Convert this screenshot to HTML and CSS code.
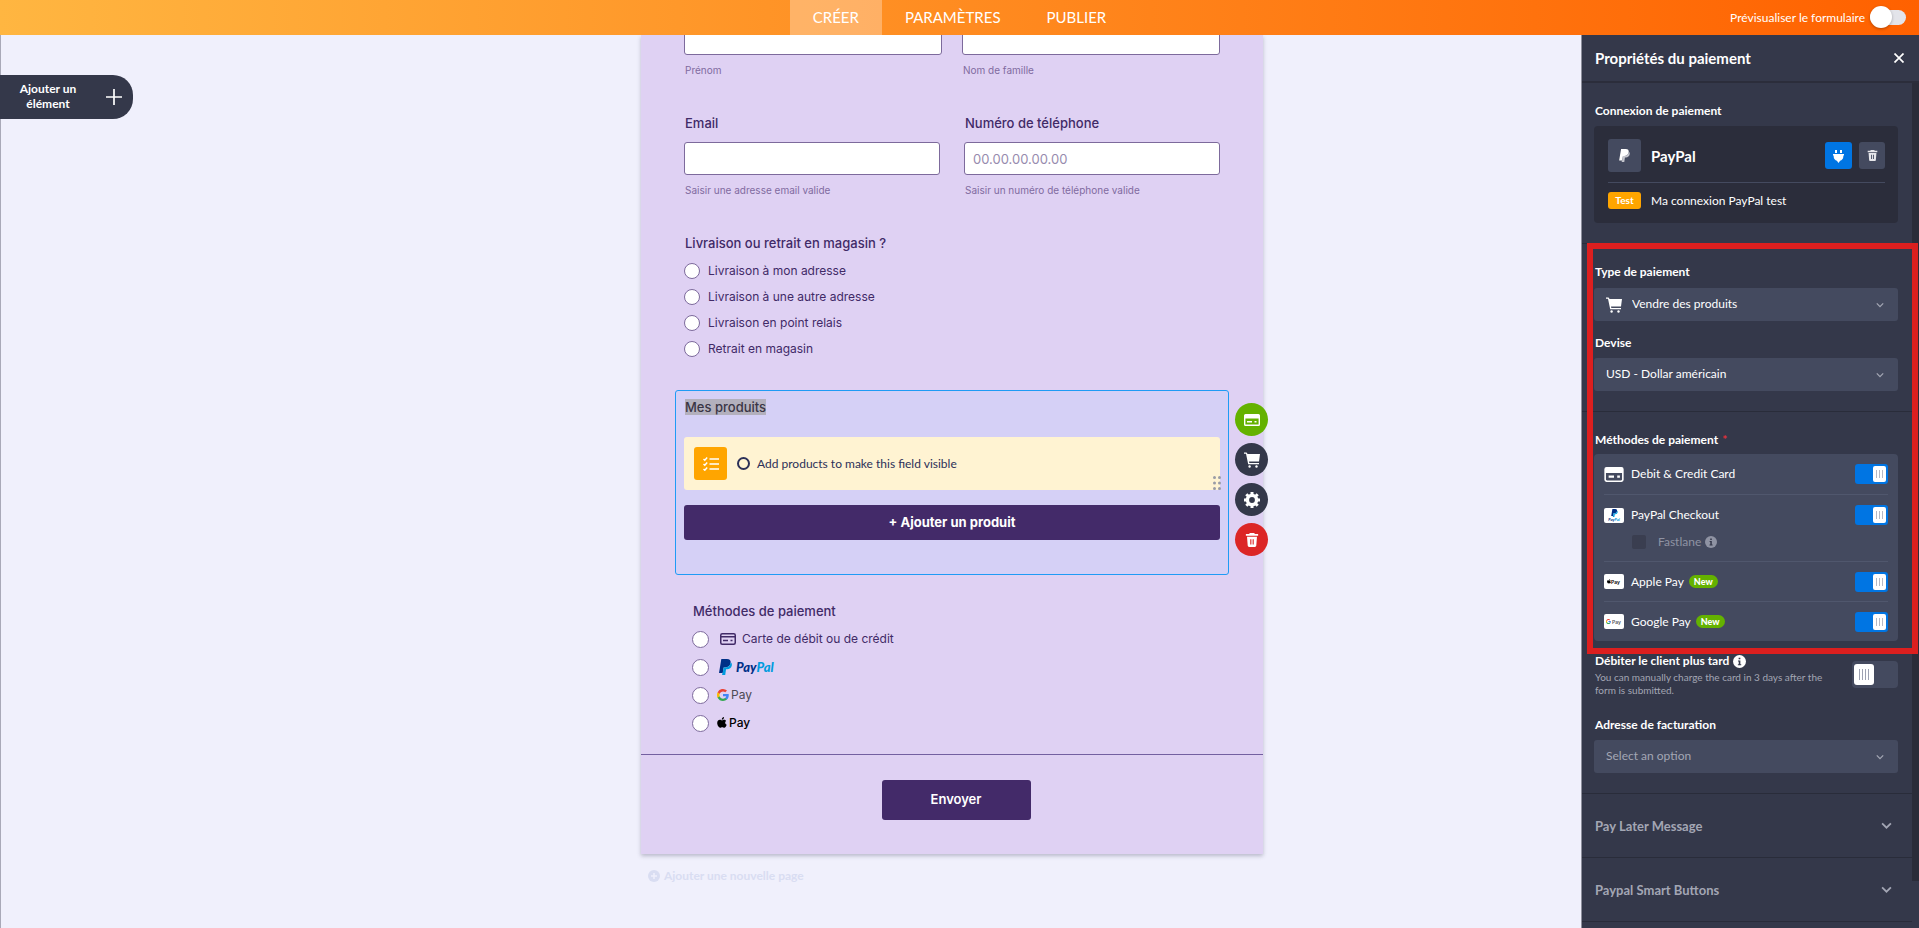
FILE: index.html
```html
<!DOCTYPE html>
<html lang="fr">
<head>
<meta charset="utf-8">
<title>Propriétés du paiement</title>
<link rel="stylesheet" href="styles.css">
</head>
<body>
<svg class="defs" aria-hidden="true">
  <symbol id="i-cart" viewBox="0 0 16 16"><path d="M0 .5h2.200c.5 0 .9.3 1 .8L3.400 2H16l-1 7.500H5l.3 1.500H15V12.300H4.200L2 1.800H0z" fill="currentColor"/><circle cx="5.600" cy="14.500" r="1.200" fill="currentColor"/><circle cx="12.500" cy="14.500" r="1.200" fill="currentColor"/></symbol>
  <symbol id="i-trash" viewBox="0 0 16 16"><path fill="currentColor" fill-rule="evenodd" d="M5.500 0h5l.8 1.200H15v2H1v-2h3.700zM2.300 4.200h11.400l-.8 10.200c-.1.900-.7 1.600-1.600 1.600H4.700c-.9 0-1.500-.7-1.600-1.600zM6 7v6h1.300V7zm2.700 0v6H10V7z"/></symbol>
  <symbol id="i-cardfill" viewBox="0 0 18 14"><path fill="currentColor" fill-rule="evenodd" d="M2 0h14a2 2 0 0 1 2 2v10a2 2 0 0 1-2 2H2a2 2 0 0 1-2-2V2a2 2 0 0 1 2-2zM1.500 5.500V11.500c0 .6.400 1 1 1h13c.6 0 1-.4 1-1V5.500zM4 8h5v2H4zm8 0h2.500v2H12z"/></symbol>
  <symbol id="i-down" viewBox="0 0 10 6"><path d="M1 1l4 4 4-4" fill="none" stroke="currentColor" stroke-width="1.600"/></symbol>
  <symbol id="i-info" viewBox="0 0 12 12"><circle cx="6" cy="6" r="6" fill="currentColor"/><path d="M5.200 2.500h1.600v1.500H5.200zM4.600 5h2.200v3.500h.8v1H4.500v-1h.8V6h-.7z" fill="#34384a"/></symbol>
  <symbol id="i-pp" viewBox="0 0 14 17"><path d="M2.500 0h6c3 0 4.500 1.600 4 4.300-.6 3.200-2.700 4.700-5.700 4.700H5l-1 6H0z" fill="#003087"/><path d="M12.700 3.500c1.100.8 1.400 2 1.100 3.500-.6 2.800-2.400 4-5 4H7.600L6.700 17H3.300l.4-2H4l1-6h1.800c3 0 5.100-1.500 5.900-5.500z" fill="#009cde"/></symbol>
  <symbol id="i-g" viewBox="0 0 24 24"><path fill="#4285f4" d="M23.500 12.300c0-.8-.1-1.600-.2-2.300H12v4.500h6.500c-.3 1.500-1.100 2.800-2.400 3.600v3h3.900c2.200-2.100 3.500-5.200 3.500-8.800z"/><path fill="#34a853" d="M12 24c3.200 0 6-1.100 7.900-2.900l-3.900-3c-1.100.7-2.400 1.200-4 1.200-3.100 0-5.800-2.100-6.700-5H1.300v3.100C3.300 21.300 7.300 24 12 24z"/><path fill="#fbbc04" d="M5.300 14.300a7.200 7.200 0 0 1 0-4.600V6.600h-4a12 12 0 0 0 0 10.800z"/><path fill="#ea4335" d="M12 4.800c1.800 0 3.300.6 4.600 1.800L20 3.100A12 12 0 0 0 1.300 6.600l4 3.100c.9-2.800 3.600-4.900 6.700-4.900z"/></symbol>
  <symbol id="i-apple" viewBox="0 0 14 17"><path fill="#000" d="M9.900 0c.1 1.100-.3 2-.9 2.700-.6.700-1.500 1.200-2.300 1.100-.1-1 .3-2 .9-2.600C8.200.500 9.200 0 9.900 0zM12.800 5.700c-1.900 1.200-1.800 4.100.8 5.200-.5 1.500-1.900 4.200-3.400 4.200-1.100 0-1.500-.7-2.800-.7s-1.800.7-2.800.7C2.500 15.200.200 11.500.200 8.500c0-2.900 1.900-4.500 3.800-4.500 1.200 0 2.300.9 3 .9s2-.9 3.400-.9c.8 0 1.800.5 2.400 1.700z"/></symbol>
</svg>

<header class="topbar">
  <nav class="tabs">
    <a class="tab tab-active" href="#creer">CRÉER</a>
    <a class="tab" href="#parametres">PARAMÈTRES</a>
    <a class="tab" href="#publier">PUBLIER</a>
  </nav>
  <label class="preview">Prévisualiser le formulaire <input class="preview-switch" type="checkbox"></label>
</header>

<div class="workspace">
  <div class="left">
    <button class="add-element" type="button"><span>Ajouter un élément</span>
      <svg width="16" height="16" viewBox="0 0 16 16"><path d="M8 0v16M0 8h16" stroke="#fff" stroke-width="1.700"/></svg>
    </button>
  </div>

  <main class="stage">
    <form class="form">
      <div class="row row-names">
        <div class="field"><input class="box" id="prenom" type="text"><label class="sub" for="prenom">Prénom</label></div>
        <div class="field"><input class="box" id="nom" type="text"><label class="sub" for="nom">Nom de famille</label></div>
      </div>
      <div class="row row-contact">
        <div class="field"><label class="title" for="email">Email</label><input class="box" id="email" type="email"><span class="sub">Saisir une adresse email valide</span></div>
        <div class="field"><label class="title" for="tel">Numéro de téléphone</label><input class="box" id="tel" type="tel" placeholder="00.00.00.00.00"><span class="sub">Saisir un numéro de téléphone valide</span></div>
      </div>
      <div class="group" role="radiogroup" aria-labelledby="liv">
        <div class="title" id="liv">Livraison ou retrait en magasin ?</div>
        <label class="option"><input class="radio" type="radio" name="liv">Livraison à mon adresse</label>
        <label class="option"><input class="radio" type="radio" name="liv">Livraison à une autre adresse</label>
        <label class="option"><input class="radio" type="radio" name="liv">Livraison en point relais</label>
        <label class="option"><input class="radio" type="radio" name="liv">Retrait en magasin</label>
      </div>

      <section class="products">
        <div class="products-title"><span class="selected-text">Mes produits</span></div>
        <div class="notice">
          <span class="notice-icon"><svg width="16" height="14" viewBox="0 0 16 14" fill="none" stroke="#fff" stroke-width="1.500"><path d="M6.500 2H16M6.500 7H16M6.500 12H16M.5 2l1.300 1.200L4.200.6M.5 7l1.300 1.200 2.400-2.600M.5 12l1.300 1.200 2.400-2.600"/></svg></span>
          <span class="ring"></span>
          <span>Add products to make this field visible</span>
        </div>
        <button class="add-product" type="button">+ Ajouter un produit</button>
        <svg class="grip" width="8" height="14" viewBox="0 0 8 14" fill="#9a9ca6"><circle cx="1.500" cy="1.500" r="1.500"/><circle cx="6.500" cy="1.500" r="1.500"/><circle cx="1.500" cy="7" r="1.500"/><circle cx="6.500" cy="7" r="1.500"/><circle cx="1.500" cy="12.500" r="1.500"/><circle cx="6.500" cy="12.500" r="1.500"/></svg>
        <div class="tools">
          <button class="tool tool-green" type="button" aria-label="Paiement"><svg width="16" height="12" viewBox="0 0 16 12"><path fill="#fff" fill-rule="evenodd" d="M1.500 0h13A1.500 1.500 0 0 1 16 1.500v9a1.500 1.500 0 0 1-1.500 1.500h-13A1.500 1.500 0 0 1 0 10.500v-9A1.500 1.500 0 0 1 1.500 0zM1.400 4.500v6h13.200v-6zM3 7h5v1.500H3zm7.500 0h2v1.500h-2z"/></svg></button>
          <button class="tool" type="button" aria-label="Produits"><svg width="16" height="16"><use href="#i-cart"/></svg></button>
          <button class="tool" type="button" aria-label="Réglages"><svg width="16" height="16" viewBox="0 0 16 16"><circle cx="8" cy="8" r="4.600" fill="none" stroke="#fff" stroke-width="3.400"/><path d="M8 0v3M8 13v3M0 8h3M13 8h3M2.300 2.300l2 2M11.700 11.700l2 2M2.300 13.700l2-2M11.700 4.300l2-2" stroke="#fff" stroke-width="3"/></svg></button>
          <button class="tool tool-red" type="button" aria-label="Supprimer"><svg width="14" height="16"><use href="#i-trash"/></svg></button>
        </div>
      </section>

      <div class="group group-pay" role="radiogroup" aria-labelledby="met">
        <div class="title" id="met">Méthodes de paiement</div>
        <label class="option"><input class="radio" type="radio" name="met"><svg class="card-icon" width="16" height="12" viewBox="0 0 16 12" fill="none" stroke="#412a67" stroke-width="1.500"><rect x=".75" y=".75" width="14.500" height="10.500" rx="1.500"/><path d="M1 3.800h14M3 7.500h5M10.500 7.500h2"/></svg>Carte de débit ou de crédit</label>
        <label class="option"><input class="radio" type="radio" name="met"><span class="brand brand-pp"><svg width="13" height="16"><use href="#i-pp"/></svg><span class="pp-word"><b>Pay</b><i>Pal</i></span></span></label>
        <label class="option"><input class="radio" type="radio" name="met"><span class="brand brand-g"><svg width="12" height="12"><use href="#i-g"/></svg>Pay</span></label>
        <label class="option"><input class="radio" type="radio" name="met"><span class="brand brand-apple"><svg width="10" height="12"><use href="#i-apple"/></svg>Pay</span></label>
      </div>
      <div class="submit"><button class="send" type="button">Envoyer</button></div>
    </form>
    <button class="new-page" type="button"><svg width="12" height="12" viewBox="0 0 12 12"><circle cx="6" cy="6" r="6" fill="#d9ddf2"/><path d="M6 3v6M3 6h6" stroke="#f0f0fc" stroke-width="1.500"/></svg>Ajouter une nouvelle page</button>
  </main>

  <aside class="panel">
    <div class="panel-head"><h2>Propriétés du paiement</h2>
      <button class="close" type="button" aria-label="Fermer"><svg width="10" height="10" viewBox="0 0 10 10"><path d="M.5.500l9 9M9.500.500l-9 9" stroke="#fff" stroke-width="1.700"/></svg></button></div>
    <div class="panel-main">
      <div class="panel-body">
        <section class="sec sec-connection">
          <h3>Connexion de paiement</h3>
          <div class="connection">
            <div class="conn-top">
              <span class="conn-logo"><svg width="11" height="13" viewBox="0 0 14 17"><path d="M2.500 0h6c3 0 4.500 1.600 4 4.300-.6 3.200-2.700 4.700-5.700 4.700H5l-1 6H0z" fill="#fff"/><path d="M12.700 3.500c1.100.8 1.400 2 1.100 3.500-.6 2.800-2.400 4-5 4H7.600L6.700 17H3.300l.4-2H4l1-6h1.800c3 0 5.100-1.500 5.900-5.500z" fill="#c4c5cd"/></svg></span>
              <strong>PayPal</strong>
              <button class="mini mini-blue" type="button" aria-label="Connexion"><svg width="11" height="14" viewBox="0 0 11 14"><path fill="#fff" d="M2 1h2v3H2zM7 1h2v3H7zM0 5h11v1.500h-.7v1.300c0 2-1.500 3.500-3.200 4L5.500 14l-1.600-2.200C2.200 11.300.7 9.800.7 7.800V6.500H0z"/></svg></button>
              <button class="mini" type="button" aria-label="Supprimer la connexion"><svg width="11" height="13" color="#e6e6ea"><use href="#i-trash"/></svg></button>
            </div>
            <div class="conn-bottom"><span class="test">Test</span><span>Ma connexion PayPal test</span></div>
          </div>
        </section>

        <div class="highlight">
          <section class="sec sec-type">
            <label class="h" for="type">Type de paiement</label>
            <div class="pick"><svg class="pick-icon" width="16" height="16"><use href="#i-cart"/></svg><select class="pick-with-icon" id="type"><option>Vendre des produits</option></select><svg class="pick-arrow" width="8" height="6"><use href="#i-down"/></svg></div>
            <label class="h h-next" for="devise">Devise</label>
            <div class="pick pick-near"><select id="devise"><option>USD - Dollar américain</option></select><svg class="pick-arrow" width="8" height="6"><use href="#i-down"/></svg></div>
          </section>
          <section class="sec sec-methods">
            <h3>Méthodes de paiement <span class="req">*</span></h3>
            <div class="methods">
              <div class="method"><svg class="method-icon" width="18" height="14"><use href="#i-cardfill"/></svg><label for="m1">Debit &amp; Credit Card</label><input class="toggle" id="m1" type="checkbox" checked></div>
              <div class="method-group">
                <div class="method"><span class="chip"><svg width="20" height="15" viewBox="0 0 20 15"><use href="#i-pp" x="7" y="1" width="7" height="8"/><text x="10" y="13" class="chip-pp"><tspan fill="#003087">Pay</tspan><tspan fill="#009cde">Pal</tspan></text></svg></span><label for="m2">PayPal Checkout</label><input class="toggle" id="m2" type="checkbox" checked></div>
                <div class="fastlane"><input class="check" id="fl" type="checkbox" disabled><label for="fl">Fastlane</label><svg width="12" height="12"><use href="#i-info"/></svg></div>
              </div>
              <div class="method"><span class="chip"><svg width="20" height="15" viewBox="0 0 20 15"><use href="#i-apple" x="3" y="5" width="4" height="5"/><text x="7" y="10" class="chip-text">Pay</text></svg></span><label for="m3">Apple Pay</label><span class="new">New</span><input class="toggle" id="m3" type="checkbox" checked></div>
              <div class="method"><span class="chip"><svg width="20" height="15" viewBox="0 0 20 15"><use href="#i-g" x="2" y="5" width="5" height="5"/><text x="8" y="10" class="chip-text chip-grey">Pay</text></svg></span><label for="m4">Google Pay</label><span class="new">New</span><input class="toggle" id="m4" type="checkbox" checked></div>
            </div>
          </section>
        </div>

        <section class="sec sec-later">
          <div class="later">
            <div class="later-text"><label class="h" for="later">Débiter le client plus tard <svg width="13" height="13"><use href="#i-info"/></svg></label>
              <p>You can manually charge the card in 3 days after the form is submitted.</p></div>
            <input class="toggle toggle-off" id="later" type="checkbox">
          </div>
          <label class="h h-address" for="addr">Adresse de facturation</label>
          <div class="pick pick-near"><select class="pick-empty" id="addr"><option>Select an option</option></select><svg class="pick-arrow" width="8" height="6"><use href="#i-down"/></svg></div>
        </section>
        <button class="fold" type="button">Pay Later Message<svg width="11" height="7"><use href="#i-down"/></svg></button>
        <button class="fold" type="button">Paypal Smart Buttons<svg width="11" height="7"><use href="#i-down"/></svg></button>
      </div>
      <div class="track"></div>
    </div>
  </aside>
</div>
</body>
</html>
```
FILE: styles.css
```css
* { box-sizing: border-box; }
body {
  margin: 0;
  height: 100vh;
  display: flex;
  flex-direction: column;
  overflow: hidden;
  background: #f0f0fc;
  color: #fff;
  font: 13px/16px Lato, "Liberation Sans", sans-serif;
}
button, input, select { font: inherit; color: inherit; margin: 0; }
button { border: 0; padding: 0; background: none; cursor: pointer; }
h2, h3, p { margin: 0; }
svg { flex: none; }
.defs { position: absolute; width: 0; height: 0; }

/* Top bar */
.topbar {
  flex: none;
  display: grid;
  grid-template-columns: 1fr auto 1fr;
  align-items: center;
  height: 35px;
  background: linear-gradient(90deg, #ffb641, #ff6100);
}
.tabs { grid-column: 2; display: flex; }
.tab {
  height: 35px;
  padding: 0 23px;
  font-size: 15px;
  line-height: 34px;
  color: #fff;
  text-decoration: none;
}
.tab-active { background: rgba(255, 255, 255, .3); }
.preview {
  justify-self: end;
  display: flex;
  align-items: center;
  gap: 5px;
  padding-right: 13px;
  font-size: 12px;
}
.preview-switch {
  appearance: none;
  position: relative;
  width: 36px;
  height: 15px;
  border-radius: 8px;
  background: #e3e4ea;
}
.preview-switch::before {
  content: "";
  position: absolute;
  left: 0;
  top: -4px;
  width: 22px;
  height: 22px;
  border-radius: 50%;
  background: #fff;
  box-shadow: 0 1px 3px rgba(0, 0, 0, .3);
}

/* Workspace */
.workspace {
  flex: 1;
  min-height: 0;
  display: grid;
  grid-template-columns: 1fr 622px 1fr;
  padding-right: 15px;
}
.left { border-left: 1px solid #a9a9b8; padding-top: 40px; }
.add-element {
  display: flex;
  align-items: center;
  justify-content: space-between;
  width: 133px;
  height: 44px;
  margin-left: -1px;
  padding: 0 11px 0 14px;
  border-radius: 0 20px 20px 0;
  background: #34384a;
  font-size: 12px;
  font-weight: 700;
  line-height: 15px;
}
.add-element span { width: 68px; padding-bottom: 2px; }

.form {
  min-height: 819px;
  display: flex;
  flex-direction: column;
  background: #dfd1f3;
  box-shadow: 0 2px 4px rgba(60, 60, 90, .3);
  color: #412a67;
  font-family: Inter, sans-serif;
}
.stage { overflow: visible; clip-path: inset(0 -10px 0 -10px); }
.row { display: grid; grid-template-columns: 1fr 1fr; gap: 20px; padding: 0 43px; }
.row-names { margin-top: -13px; }
.row-contact { gap: 24px; margin-top: 36px; }
.field { display: flex; flex-direction: column; }
.box {
  width: 100%;
  height: 33px;
  padding: 0 8px;
  border: 1px solid #7d6a9c;
  border-radius: 3px;
  background: #fff;
  font-size: 13px;
}
.box::placeholder { color: #978bae; }
.title { padding-left: 1px; font-size: 13px; font-weight: 500; line-height: 20px; }
.field .title { margin-bottom: 9px; }
.sub { padding-left: 1px; margin-top: 8px; font-size: 10px; line-height: 14px; color: #7f6ba0; }
.group { padding: 0 43px; margin-top: 36px; }
.option { display: flex; align-items: center; height: 26px; font-size: 12px; }
.group > .title { margin-bottom: 5px; }
.radio {
  appearance: none;
  flex: none;
  width: 16px;
  height: 16px;
  margin-right: 8px;
  border: 1px solid #7d6a9c;
  border-radius: 50%;
  background: #fff;
}

.products {
  position: relative;
  height: 185px;
  margin: 28px 34px 0;
  padding: 8px;
  border: 1px solid #1f9bf5;
  border-radius: 3px;
  background: #d5d0f6;
}
.products-title { height: 38px; padding-left: 1px; font-size: 13px; font-weight: 500; line-height: 16px; }
.selected-text { background: #b3b0bd; color: #3a3545; }
.notice {
  display: flex;
  align-items: center;
  height: 53px;
  padding: 0 10px;
  border-radius: 3px;
  background: #fff3d2;
  color: #2c3058;
  font: 12px/16px Lato, sans-serif;
}
.notice-icon {
  display: grid;
  place-items: center;
  width: 33px;
  height: 33px;
  border-radius: 3px;
  background: #ffa500;
}
.ring { width: 13px; height: 13px; margin: 0 7px 0 10px; border: 2px solid #2c3058; border-radius: 50%; }
.add-product {
  width: 100%;
  height: 35px;
  margin-top: 15px;
  padding-bottom: 2px;
  border-radius: 3px;
  background: #432a69;
  color: #fff;
  font-size: 13px;
  font-weight: 700;
}
.grip { position: absolute; right: 7px; top: 85px; }
.tools {
  position: absolute;
  left: 100%;
  top: 12px;
  margin-left: 7px;
  display: flex;
  flex-direction: column;
  gap: 7px;
}
.tool {
  display: grid;
  place-items: center;
  width: 33px;
  height: 33px;
  border-radius: 50%;
  background: #34384a;
  color: #fff;
}
.tool-green { background: #64b200; }
.tool-red { background: #dc2626; }

.group-pay { padding: 0 51px; margin-top: 26px; }
.group-pay > .title { margin-bottom: 4px; }
.group-pay .option { height: 28px; }
.group-pay .radio { width: 17px; height: 17px; }
.card-icon { margin: 0 6px 0 3px; }
.brand { display: flex; align-items: center; gap: 2px; font-size: 12px; }
.brand-pp { gap: 4px; padding-left: 2px; }
.pp-word { font: italic 900 13px/16px Lato, sans-serif; }
.pp-word b { color: #003087; font-weight: 900; }
.pp-word i { color: #009cde; }
.brand-g { color: #4c4a55; }
.brand-apple { color: #000; font-weight: 500; }
.submit { margin-top: 17px; padding-top: 25px; border-top: 1px solid #7360a0; text-align: center; }
.send {
  width: 149px;
  height: 40px;
  margin-left: 8px;
  padding-bottom: 2px;
  border-radius: 3px;
  background: #432a69;
  color: #fff;
  font-size: 13px;
  font-weight: 600;
}
.new-page {
  display: flex;
  align-items: center;
  gap: 4px;
  margin: 14px 0 0 7px;
  color: #d9ddf2;
  font-size: 12px;
  font-weight: 700;
}

/* Properties panel */
.panel {
  justify-self: end;
  display: flex;
  flex-direction: column;
  min-height: 0;
  width: 338px;
  margin-right: -15px;
  border-left: 1px solid #8d8f9c;
  background: #34384a;
}
.panel-head {
  flex: none;
  display: flex;
  align-items: center;
  justify-content: space-between;
  height: 48px;
  padding: 0 15px 0 13px;
  border-bottom: 2px solid #2b2d3b;
}
.panel-head h2 { font-size: 15px; font-weight: 700; }
.close { display: flex; }
.panel-main { flex: 1; min-height: 0; display: flex; }
.panel-body { flex: 1; min-width: 0; }
.track { width: 7px; height: 798px; background: #2a2c39; }
.sec { padding: 20px 14px 20px 12px; border-bottom: 1px solid #292c3a; }
h3, .h { display: flex; align-items: center; gap: 4px; font-size: 12px; font-weight: 700; line-height: 16px; padding-left: 1px; }
.connection { margin-top: 7px; padding: 13px 13px 14px 14px; border-radius: 4px; background: #2b2d3b; }
.conn-top { display: flex; align-items: center; padding-bottom: 10px; border-bottom: 1px solid #444a5f; }
.conn-top strong { flex: 1; padding-left: 10px; font-size: 15px; }
.conn-logo, .mini {
  display: grid;
  place-items: center;
  width: 33px;
  height: 33px;
  border-radius: 3px;
  background: #444a5f;
}
.mini { width: 26px; height: 27px; margin-left: 7px; }
.mini-blue { width: 27px; background: #0075e3; }
.conn-bottom { display: flex; align-items: center; gap: 10px; padding-top: 9px; font-size: 12px; }
.test { width: 33px; border-radius: 3px; background: #ffa500; font-size: 10px; font-weight: 700; line-height: 17px; text-align: center; }

.highlight { position: relative; }
.highlight::after {
  content: "";
  position: absolute;
  inset: -1px -6px -1px 5px;
  border: 6px solid #dc1f1f;
  pointer-events: none;
}
.pick { position: relative; margin-top: 8px; }
.pick-near { margin-top: 7px; }
.pick select {
  appearance: none;
  display: block;
  width: 100%;
  height: 33px;
  padding: 0 30px 2px 12px;
  border: 0;
  border-radius: 3px;
  background: #444a5f;
  font-size: 12px;
}
.pick .pick-with-icon { padding-left: 38px; }
.pick .pick-empty { color: #a3a6b4; }
.pick-icon { position: absolute; left: 12px; top: 9px; }
.pick-arrow { position: absolute; right: 14px; top: 14px; color: #a3a6b4; }
.h-next { margin-top: 14px; }
.sec-methods { padding-bottom: 12px; border-bottom: 0; }
.req { color: #e0303a; }
.methods { margin-top: 6px; padding: 0 10px; border-radius: 4px; background: #444a5f; }
.method { display: flex; align-items: center; height: 40px; font-size: 12px; }
.methods > * + * { border-top: 1px solid #50576d; }
.method-icon, .chip { width: 20px; height: 15px; margin-right: 7px; }
.chip { display: block; flex: none; border-radius: 2px; background: #fff; }
.chip svg { display: block; }
.chip-text { font: 600 5px Inter, sans-serif; fill: #000; }
.chip-grey { fill: #55565c; }
.chip-pp { font: italic 700 4px Lato, sans-serif; text-anchor: middle; }
.new { margin-left: 5px; padding: 0 5px; border-radius: 7px; background: #64b200; font-size: 9px; font-weight: 900; line-height: 13px; }
.toggle {
  appearance: none;
  position: relative;
  width: 33px;
  height: 20px;
  margin-left: auto;
  border-radius: 3px;
  background: #0075e3;
}
.toggle::before {
  content: "";
  position: absolute;
  right: 2px;
  top: 2px;
  width: 13px;
  height: 16px;
  border-radius: 2px;
  background: repeating-linear-gradient(90deg, #b6b9c5 0 1px, transparent 1px 3px) center / 7px 8px no-repeat, #fff;
}
.toggle-off { flex: none; width: 46px; height: 27px; margin-top: 8px; border-radius: 4px; background: #444a5f; }
.toggle-off::before {
  left: 2px;
  top: 3px;
  width: 20px;
  height: 21px;
  border-radius: 3px;
  background: repeating-linear-gradient(90deg, #9da1b1 0 1px, transparent 1px 3px) center / 10px 11px no-repeat, #fff;
}
.fastlane { display: flex; align-items: center; gap: 4px; height: 26px; padding: 0 0 12px 28px; color: #8f93a3; font-size: 12px; }
.check { appearance: none; width: 14px; height: 14px; margin-right: 8px; border-radius: 2px; background: #3a3e50; }
.sec-later { padding-top: 0; }
.later { display: flex; align-items: flex-start; justify-content: space-between; }
.later p { padding-left: 1px; font-size: 10px; line-height: 13px; color: #a3a6b4; margin-top: 2px; }
.later-text { width: 240px; }
.h-address { margin-top: 20px; }
.fold {
  display: flex;
  align-items: center;
  justify-content: space-between;
  width: 100%;
  height: 64px;
  padding: 0 20px 0 13px;
  border-bottom: 1px solid #292c3a;
  color: #a3a6b4;
  font-size: 13px;
  font-weight: 700;
}
```
